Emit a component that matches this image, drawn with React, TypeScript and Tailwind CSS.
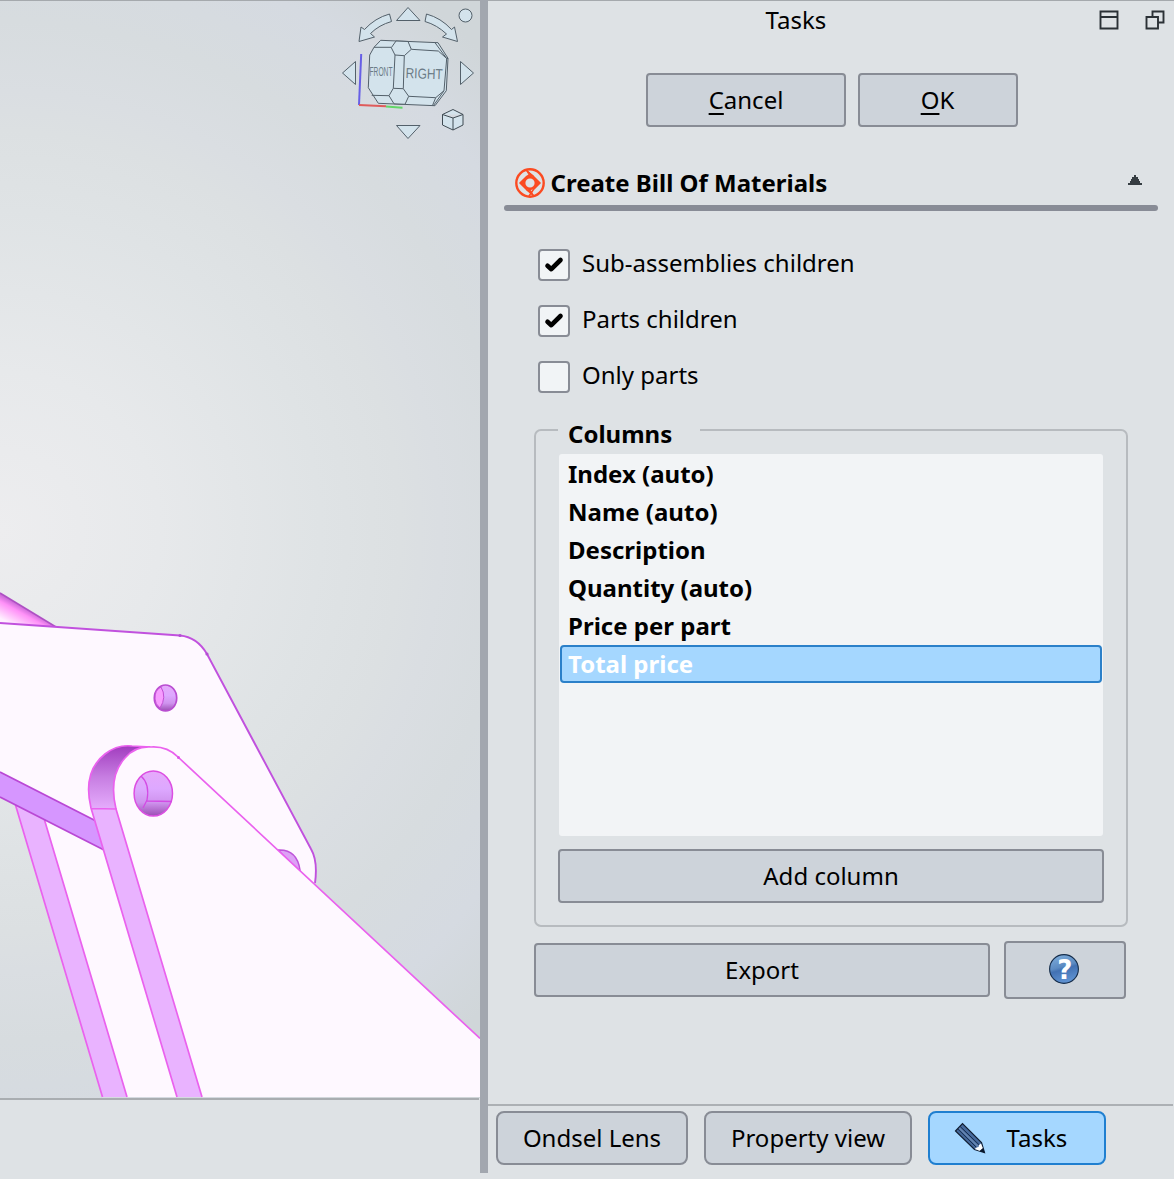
import React from "react";

const rows = [
  "Index (auto)",
  "Name (auto)",
  "Description",
  "Quantity (auto)",
  "Price per part",
  "Total price",
];

const buttonBase =
  "flex shrink-0 items-center justify-center rounded-[4px] border-2 border-[#888c95] bg-[#cdd3da] leading-8";

function NavigationCube() {
  return (
    <g stroke="#53606a" strokeWidth="1" fill="#d3e3ec" strokeLinejoin="round">
      <path d="M408 7.500L420 20.500H396.500Z" />
      <path d="M408 138.500L420 125.500H396.500Z" />
      <path d="M342.500 73L355.500 61.500V84.500Z" />
      <path d="M473.500 73L460.500 61.500V84.500Z" />
      <circle cx="465.500" cy="15.500" r="6.500" />
      <path d="M389.500 14L391.500 21.500Q379 25 370.500 33.500L374.500 37L359 41.500L361 27L364.500 29.500Q375 18 389.500 14Z" />
      <path d="M426.500 14L425 21.500Q437 25 446.500 34L442.500 37L457.500 41.500L454.500 27L451.500 29.500Q441 18 426.500 14Z" />
      <path d="M380.700 40.300L438 42.700L448 58.300L446.300 90.700L435 105.700L378.300 103.300L368.300 87.700L369.700 55L374 47.300Z" />
      <path d="M374 47.300H391.300M371.700 95.300L389 95.700M411.300 49.300L438.300 51L446.700 58.500M446.700 58.500L444 90.700L435.700 97.700L408.700 96.300M435 42.700L446.700 58.500H448M435.700 97.700L432.500 105.500M444 90.700L433.500 105.500M395 55L393.300 88.300M404.300 55.700L403.300 88.700" fill="none" />
      <path d="M396 41L408 41.500L411.300 49.300L404.300 55.700L395 55L391.300 47.700Z" />
      <path d="M393.300 88.300L403.300 88.700L408.700 96.300L405 104.300L394 103.800L389 95.700Z" />
      <path d="M453 109.500L463 114.500V125L453 130L442.500 125V114.500ZM442.500 114.500L453 118L463 114.500M453 118V130" stroke="#3f4a52" />
      <path d="M361.200 54L359 105" stroke="#675fe6" strokeWidth="2" fill="none" />
      <path d="M359 105L386 106.300" stroke="#df5b5b" strokeWidth="2" fill="none" />
      <path d="M386 106.500L402.500 107.800" stroke="#62d668" strokeWidth="2" fill="none" />
      <g stroke="none" fill="#6b7b86" fontFamily="Liberation Sans, sans-serif">
        <text x="369.500" y="75.500" fontSize="12.500" textLength="23" lengthAdjust="spacingAndGlyphs">FRONT</text>
        <text x="405.500" y="78" fontSize="14.500" textLength="37" lengthAdjust="spacingAndGlyphs" transform="rotate(2 405 78)">RIGHT</text>
      </g>
    </g>
  );
}

function Model() {
  return (
    <svg className="block h-[1097px] w-[480px]" viewBox="0 1 480 1097">
      <defs>
        <linearGradient id="cap" x1="0" y1="0" x2="0" y2="1">
          <stop stopColor="#a13cbe" />
          <stop offset=".5" stopColor="#c77ee2" />
          <stop offset="1" stopColor="#e5acfc" />
        </linearGradient>
        <linearGradient id="hole" x1="0" y1="0" x2="0" y2="1">
          <stop stopColor="#e6a9fb" />
          <stop offset=".4" stopColor="#dda8ff" />
          <stop offset=".7" stopColor="#cf93ee" />
          <stop offset="1" stopColor="#9c4eb4" />
        </linearGradient>
        <linearGradient id="rod" gradientUnits="userSpaceOnUse" x1="29" y1="608" x2="18" y2="628">
          <stop stopColor="#b85ccb" />
          <stop offset=".35" stopColor="#ff91f8" />
          <stop offset="1" stopColor="#fff0ff" />
        </linearGradient>
      </defs>
      <path d="M0 593L56 627L0 623Z" fill="url(#rod)" />
      <path d="M0 593L56 627" stroke="#ae50c4" strokeWidth="1.500" />
      <path d="M15 803L45 820L110 845L210 1097H103Z" fill="#fef8ff" />
      <path d="M15.500 805L44.500 820L127 1097H102.500Z" fill="#e9b3ff" />
      <path d="M15.500 805L102.500 1097M44.500 820L127 1097" stroke="#ea62ee" strokeWidth="1.700" fill="none" />
      <path d="M0 623L180 635.500Q197 637 207 654L311 849Q318 861 315 883L100 840L0 772Z" fill="#fef8ff" />
      <path d="M0 623L180 635.500Q197 637 207 654L311 849Q318 861 315 883" stroke="#c151de" strokeWidth="1.900" fill="none" />
      <path d="M0 772L96 821L106 851L0 797Z" fill="#d696ff" />
      <path d="M0 772L96 821M0 797L104 850" stroke="#b948d5" strokeWidth="1.700" fill="none" />
      <path d="M278 850Q297 849 300 870L296 869Z" fill="#dda2f6" stroke="#be55da" strokeWidth="1.500" />
      <path d="M91 808C85 783 91 765 105 754C114 747 123 745 132 746L151 747Q135 746 125 758C114 770 111 788 116 809Z" fill="url(#cap)" />
      <path d="M91 808L116 809L202 1097H177Z" fill="#e9b3ff" />
      <path d="M116 809C111 788 114 770 125 758C137 744 162 743 178 757L480 1038.500V1097H202Z" fill="#fef8ff" />
      <path d="M177 1097L91 808C85 783 91 765 105 754C114 747 123 745 132 746L151 747Q167 746 178 757L480 1038.500M202 1097L116 809C111 788 114 770 125 758Q135 746 151 747M91 808.500L117 809" stroke="#ea62ee" strokeWidth="1.700" fill="none" />
      <ellipse cx="165.500" cy="698" rx="11.200" ry="13" fill="url(#hole)" stroke="#b94dd1" strokeWidth="1.700" />
      <path d="M161 687Q154.500 690 155 699Q155 704 160 708Q167 697 161 687Z" fill="#f79cff" stroke="#c24fd4" strokeWidth="1" />
      <ellipse cx="153.300" cy="793.500" rx="19.200" ry="22.500" fill="url(#hole)" stroke="#dc4ee2" strokeWidth="1.500" />
      <path d="M141 776Q150 784 147 800L143 808M147 801L172 801.500" stroke="#d34be4" strokeWidth="1.300" fill="none" />
      <circle cx="180" cy="635.500" r="1.600" fill="#b44fd3" />
      <circle cx="207" cy="654" r="1.600" fill="#b44fd3" />
      <circle cx="178.500" cy="757.500" r="1.500" fill="#dc55e6" />
      <NavigationCube />
    </svg>
  );
}

function CheckRow({ label, checked }: { label: string; checked: boolean }) {
  return (
    <label className="flex h-8 items-center gap-3">
      <span className="flex size-8 items-center justify-center rounded-[4px] border-2 border-[#888c95] bg-[#f1f4f6]">
        {checked && (
          <svg className="size-7" viewBox="0 0 28 28">
            <path d="M7.500 14.800L11.300 18.200L20.500 9" fill="none" stroke="#000" strokeWidth="4.600" strokeLinejoin="round" strokeLinecap="round" />
          </svg>
        )}
      </span>
      <span className="-mt-[5px] leading-8">{label}</span>
    </label>
  );
}

function AssemblyIcon() {
  return (
    <svg className="size-[30px]" viewBox="0 0 30 30" fill="none" stroke="#fb4b22">
      <circle cx="15" cy="15" r="13.700" strokeWidth="2.400" />
      <circle cx="15" cy="15" r="5.900" strokeWidth="2.600" />
      <path d="M11 2L18.500 8.500L25 15L18.500 21.500L14 28M19 28L11.500 21.500L5 15L11.500 8.500L16 6" strokeWidth="1.500" />
      <path d="M11 2L18.500 8L15 8.500ZM19 28L11.500 22L15 21.500ZM5 15L9.500 10.500V19.500ZM25 15L20.500 10.500V19.500Z" fill="#fb4b22" strokeWidth=".8" />
    </svg>
  );
}

function PencilIcon() {
  return (
    <svg className="size-8" viewBox="0 0 32 32">
      <path d="M1.500 9L8.500 1.500L27.500 20.500L30.500 30.500L20.500 27.500Z" fill="#46699c" stroke="#101d31" strokeWidth="1.200" />
      <path d="M3.800 7L22.500 25.500M6.200 4.500L25.300 23" stroke="#142a4b" strokeWidth="1" />
      <path d="M5.200 6L24 24.500" stroke="#6787b3" strokeWidth="1.400" />
      <path d="M27 21.500L25 23L24.500 25L22.500 25.500L20.800 27L26 29L29 26.500Z" fill="#fff" />
      <path d="M25.500 29L29 26L30.500 30.500Z" fill="#08172c" />
    </svg>
  );
}

export default function App() {
  return (
    <div className="flex h-[1179px] w-[1174px] overflow-hidden bg-[#dee2e5] font-['Noto_Sans',sans-serif] text-[24px] text-black">
      <section className="w-[480px] shrink-0 border-t border-[#a5a9ad]">
        <div className="h-[1097px] overflow-hidden bg-[radial-gradient(circle_at_0px_530px,#ededef_0px,#e7e9eb_160px,#dfe3e5_320px,#dce0e2_400px,#dadee2_440px,#d7dcdf_510px,#d5dae1_600px,#d0d6d9_680px)]">
          <Model />
        </div>
        <div className="h-0.5 w-[479px] bg-[#a9adb1]" />
      </section>

      <div className="h-[1173px] w-2 shrink-0 bg-[#a2a7af]" />

      <aside className="flex w-[686px] shrink-0 flex-col border-t border-[#a5a9ad]">
        <header className="flex h-[38px] shrink-0 items-center">
          <h1 className="ml-[277.500px] w-[63px] leading-8">Tasks</h1>
          <div className="ml-[270.500px] flex gap-[26px]">
            <svg className="size-5" viewBox="0 0 20 20" fill="none" stroke="#2b3136" strokeWidth="1.900">
              <path d="M1.500 1.500H18.500V18.500H1.500ZM1.500 7H18.500" />
            </svg>
            <svg className="size-5" viewBox="0 0 20 20" fill="none" stroke="#2b3136" strokeWidth="1.900">
              <path d="M7.500 7V1.500H18.500V12.500H13M1.500 7H13V18.500H1.500Z" />
            </svg>
          </div>
        </header>

        <div className="mt-[34px] ml-[158px] flex gap-3">
          <button className={`${buttonBase} h-[54px] w-[200px]`}>
            <span><span className="underline decoration-2 underline-offset-[4px]">C</span>ancel</span>
          </button>
          <button className={`${buttonBase} h-[54px] w-40 pr-px`}>
            <span><span className="underline decoration-2 underline-offset-[4px]">O</span>K</span>
          </button>
        </div>

        <div className="mt-10 ml-4 flex h-[38px] w-[654px] shrink-0 items-start pt-px pl-[10.500px]">
          <AssemblyIcon />
          <h2 className="-mt-px ml-1.5 leading-8 font-bold">Create Bill Of Materials</h2>
          <svg className="mt-[7px] mr-4 ml-auto h-[11px] w-[14px]" viewBox="0 0 14 11" fill="#363d42" shapeRendering="crispEdges">
            <path d="M6 0H8V2H10V4H11V6H12V8H14V10H0V8H2V6H3V4H4V2H6Z" />
          </svg>
        </div>
        <div className="ml-4 h-1.5 w-[654px] shrink-0 rounded-full bg-[#888c96]" />

        <div className="mt-[38px] ml-[50px] flex flex-col gap-6">
          <CheckRow label="Sub-assemblies children" checked />
          <CheckRow label="Parts children" checked />
          <CheckRow label="Only parts" checked={false} />
        </div>

        <div className="mt-9 ml-[46px] flex h-[498px] w-[594px] shrink-0 flex-col rounded-[7px] border-2 border-[#b7bbbf] px-[22px]">
          <h3 className="-mt-[14px] h-8 w-[142px] bg-[#dee2e5] pt-px pl-2.5 leading-8 font-bold">Columns</h3>
          <ul className="mt-[5px] ml-px h-[382px] w-[544px] shrink-0 rounded-[3px] bg-[#f2f4f6] px-px pt-px font-bold">
            {rows.map((row, i) => (
              <li
                key={row}
                className={`flex h-[38px] items-center rounded-[4px] border-2 pl-1.5 leading-8 ${
                  i === rows.length - 1 ? "border-[#2b80c9] bg-[#a5d7ff] text-white" : "border-transparent"
                }`}
              >
                {row}
              </li>
            ))}
          </ul>
          <button className={`${buttonBase} mt-[13px] h-[54px] w-[546px]`}>Add column</button>
        </div>

        <div className="mt-3.5 ml-[46px] flex shrink-0 items-center gap-3.5">
          <button className={`${buttonBase} h-[54px] w-[456px]`}>Export</button>
          <button className={`${buttonBase} h-[58px] w-[122px]`}>
            <svg className="-mt-0.5 -ml-0.5 size-[30px]" viewBox="0 0 30 30">
              <defs>
                <linearGradient id="help" x1="0" y1="0" x2=".3" y2="1">
                  <stop stopColor="#83b2df" />
                  <stop offset=".5" stopColor="#5c8bc2" />
                  <stop offset=".6" stopColor="#4271b3" />
                  <stop offset="1" stopColor="#5d90d0" />
                </linearGradient>
              </defs>
              <circle cx="15" cy="15" r="14.400" fill="url(#help)" stroke="#152c49" strokeWidth="1.100" />
              <text x="15.800" y="24.800" textAnchor="middle" fill="#fff" fontFamily="DejaVu Sans, sans-serif" fontWeight="700" fontSize="26">?</text>
            </svg>
          </button>
        </div>

        <nav className="mt-auto flex h-[75px] w-[685px] shrink-0 gap-4 border-t-2 border-[#acb0b4] pt-[5px] pl-2">
          <button className="h-[54px] w-48 rounded-[8px] border-2 border-[#888c95] bg-[#cdd3da] leading-8">Ondsel Lens</button>
          <button className="h-[54px] w-[208px] rounded-[8px] border-2 border-[#888c95] bg-[#cdd3da] leading-8">Property view</button>
          <button className="flex h-[54px] w-[178px] items-center rounded-[8px] border-2 border-[#1f7fd0] bg-[#a5d7ff] pl-6 leading-8">
            <PencilIcon />
            <span className="ml-[20.500px]">Tasks</span>
          </button>
        </nav>
      </aside>
    </div>
  );
}
